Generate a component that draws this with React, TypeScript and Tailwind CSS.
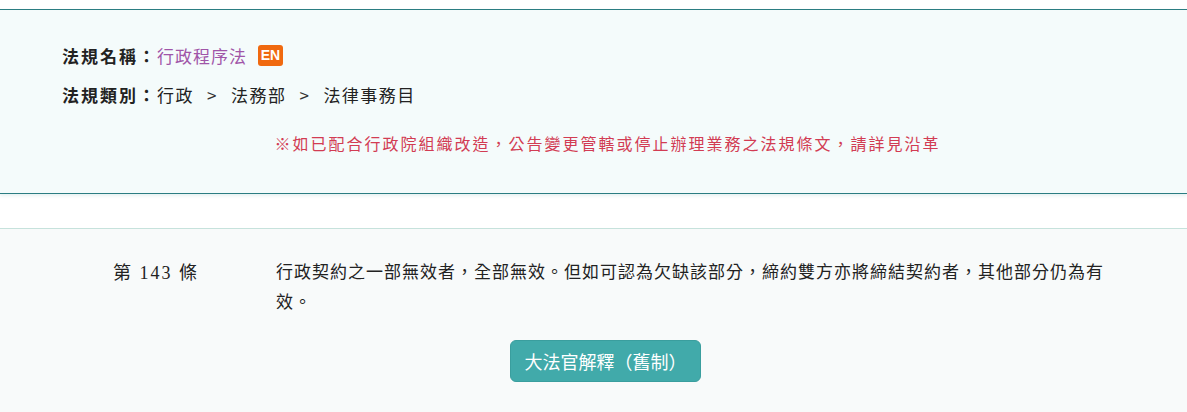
import React from "react";

const sans = "font-['Microsoft_JhengHei','Noto_Sans_CJK_TC',sans-serif]";
const ming = "font-['Liberation_Serif','Noto_Sans_CJK_TC',serif]";

const categories = ["行政", "法務部", "法律事務目"];

function LawHeader() {
  return (
    <div className="border-y border-[#2b7d82] bg-[#f4fbfb] pl-[62px] pr-[34px] pt-[26px] pb-[35px] shadow-[0_2px_3px_rgba(60,140,140,0.12)]">
      <div className={`flex items-center h-[39px] text-[17px] text-[#222] ${sans}`}>
        <span className="font-bold tracking-[2px]">法規名稱：</span>
        <a href="#" className="tracking-[1px] text-[#a055a8]">
          行政程序法
        </a>
        <span className="ml-[11px] inline-flex h-[21px] w-[25px] items-center justify-center rounded-[3px] bg-[#f0690f] text-[14px] font-bold text-white font-['Liberation_Sans',sans-serif]">
          EN
        </span>
      </div>
      <div className={`flex items-center h-[39px] text-[17px] tracking-[1.5px] text-[#222] ${sans}`}>
        <span className="font-bold tracking-[2px]">法規類別：</span>
        {categories.map((c, i) => (
          <React.Fragment key={c}>
            {i > 0 && <span className="mx-[13px] text-[#333]">&gt;</span>}
            <span>{c}</span>
          </React.Fragment>
        ))}
      </div>
      <p className={`mt-[14px] h-[30px] leading-[30px] text-center text-[16px] tracking-[2px] text-[#d23c53] ${sans}`}>
        ※如已配合行政院組織改造，公告變更管轄或停止辦理業務之法規條文，請詳見沿革
      </p>
    </div>
  );
}

function Article() {
  return (
    <div className="border-t border-[#c6e2dc] bg-[#f8fafa] pl-[62px] pr-[38px] pt-[29px] pb-[30px]">
      <div className={`flex text-[17px] tracking-[1px] leading-[30px] text-[#222] ${ming}`}>
        <div className="w-[214px] pl-[51px] shrink-0 whitespace-pre text-[18px] tracking-[2px]">第 143 條</div>
        <div className="w-[842px]">
          行政契約之一部無效者，全部無效。但如可認為欠缺該部分，締約雙方亦將締結契約者，其他部分仍為有效。
        </div>
      </div>
      <div className="mt-[22px] flex justify-center">
        <button
          className={`h-[42px] w-[191px] rounded-[6px] border border-[#3a9e9e] bg-[#41aaaa] text-[18px] text-white ${sans}`}
        >
          大法官解釋（舊制）
        </button>
      </div>
    </div>
  );
}

export default function App() {
  return (
    <div className="min-h-[412px] bg-[#f8fafa]">
      <div className="bg-white pt-[9px]">
        <LawHeader />
        <div className="h-[34px]" />
      </div>
      <Article />
    </div>
  );
}
